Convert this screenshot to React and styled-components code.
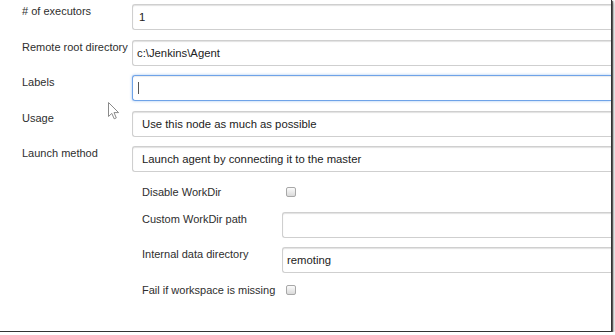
import React from "react";
import styled, { createGlobalStyle } from "styled-components";

const GlobalStyle = createGlobalStyle`
  html, body { margin: 0; padding: 0; background: #fff; }
  body { font-family: "Liberation Sans", Arial, Helvetica, sans-serif; }
`;

const Frame = styled.div`
  position: relative;
  box-sizing: border-box;
  width: 612px;
  height: 332px;
  background: #fff;
  border-right: 1px solid #333;
  border-bottom: 1px solid #333;
  box-shadow: 1px 1px 1px rgba(0, 0, 0, 0.55), 2px 2px 3px rgba(0, 0, 0, 0.3);
  overflow: hidden;
  display: flex;
  flex-direction: column;
`;

const MainForm = styled.div`
  display: flex;
  flex-direction: column;
  gap: 9.5px;
  padding: 4px 0 0 22px;
`;

const SubForm = styled.div`
  display: flex;
  flex-direction: column;
  gap: 9px;
  padding: 12px 0 0 142px;
`;

const Row = styled.div`
  display: grid;
  grid-template-columns: ${(p) => p.$labelWidth}px 1fr;
  align-items: start;
  height: ${(p) => p.$height}px;
`;

const Label = styled.div`
  font-size: 11px;
  line-height: ${(p) => p.$lh || 14}px;
  color: #2e2e2e;
  white-space: nowrap;
`;

const Field = styled.div`
  position: relative;
  box-sizing: border-box;
  height: 26px;
  border: 1px solid ${(p) => (p.$focus ? "#6fa3e8" : "#cfcfcf")};
  border-right: none;
  border-radius: 3px 0 0 3px;
  box-shadow: ${(p) =>
    p.$focus
      ? "inset 0 1px 1px rgba(0,0,0,0.08), 0 0 3px rgba(102,160,233,0.6)"
      : "inset 0 1px 1px rgba(0,0,0,0.12)"};
  padding-left: ${(p) => p.$pad}px;
  font-size: 11.3px;
  line-height: 24px;
  color: #222;
  white-space: nowrap;
  overflow: hidden;
  display: flex;
  align-items: center;
`;

const Caret = styled.span`
  display: inline-block;
  width: 1px;
  height: 12px;
  background: #555;
`;

const Checkbox = styled.span`
  display: block;
  box-sizing: border-box;
  width: 10px;
  height: 10px;
  margin: 3px 0 0 4px;
  border: 1px solid #a8a8a8;
  border-radius: 2px;
  background: linear-gradient(#fbfbfb, #dadada);
`;

const Pointer = styled.svg`
  position: absolute;
  left: 108px;
  top: 102px;
  pointer-events: none;
`;

const MouseArrow = () => (
  <Pointer width="12" height="18" viewBox="0 0 12 18">
    <path
      d="M0.5 0.5 L0.5 14.5 L3.8 11.4 L6.2 16.8 L8.3 15.9 L6 10.6 L10.6 10.6 Z"
      fill="#fff"
      stroke="#8a8a8a"
      strokeWidth="1"
      strokeLinejoin="round"
    />
  </Pointer>
);

const mainRows = [
  { label: "# of executors", value: "1", pad: 6 },
  { label: "Remote root directory", value: "c:\\Jenkins\\Agent", pad: 4 },
  { label: "Labels", caret: true, focus: true, pad: 5 },
  { label: "Usage", value: "Use this node as much as possible", pad: 9 },
  { label: "Launch method", value: "Launch agent by connecting it to the master", pad: 9 },
];

export default function App() {
  return (
    <>
      <GlobalStyle />
      <Frame>
        <MainForm>
          {mainRows.map((r) => (
            <Row key={r.label} $labelWidth={110} $height={26}>
              <Label>{r.label}</Label>
              <Field $pad={r.pad} $focus={r.focus}>
                {r.caret ? <Caret /> : r.value}
              </Field>
            </Row>
          ))}
        </MainForm>
        <SubForm>
          <Row $labelWidth={140} $height={19}>
            <Label $lh={16}>Disable WorkDir</Label>
            <Checkbox />
          </Row>
          <Row $labelWidth={140} $height={26}>
            <Label>Custom WorkDir path</Label>
            <Field $pad={4} />
          </Row>
          <Row $labelWidth={140} $height={26}>
            <Label>Internal data directory</Label>
            <Field $pad={4}>remoting</Field>
          </Row>
          <Row $labelWidth={140} $height={16}>
            <Label $lh={16}>Fail if workspace is missing</Label>
            <Checkbox />
          </Row>
        </SubForm>
        <MouseArrow />
      </Frame>
    </>
  );
}
